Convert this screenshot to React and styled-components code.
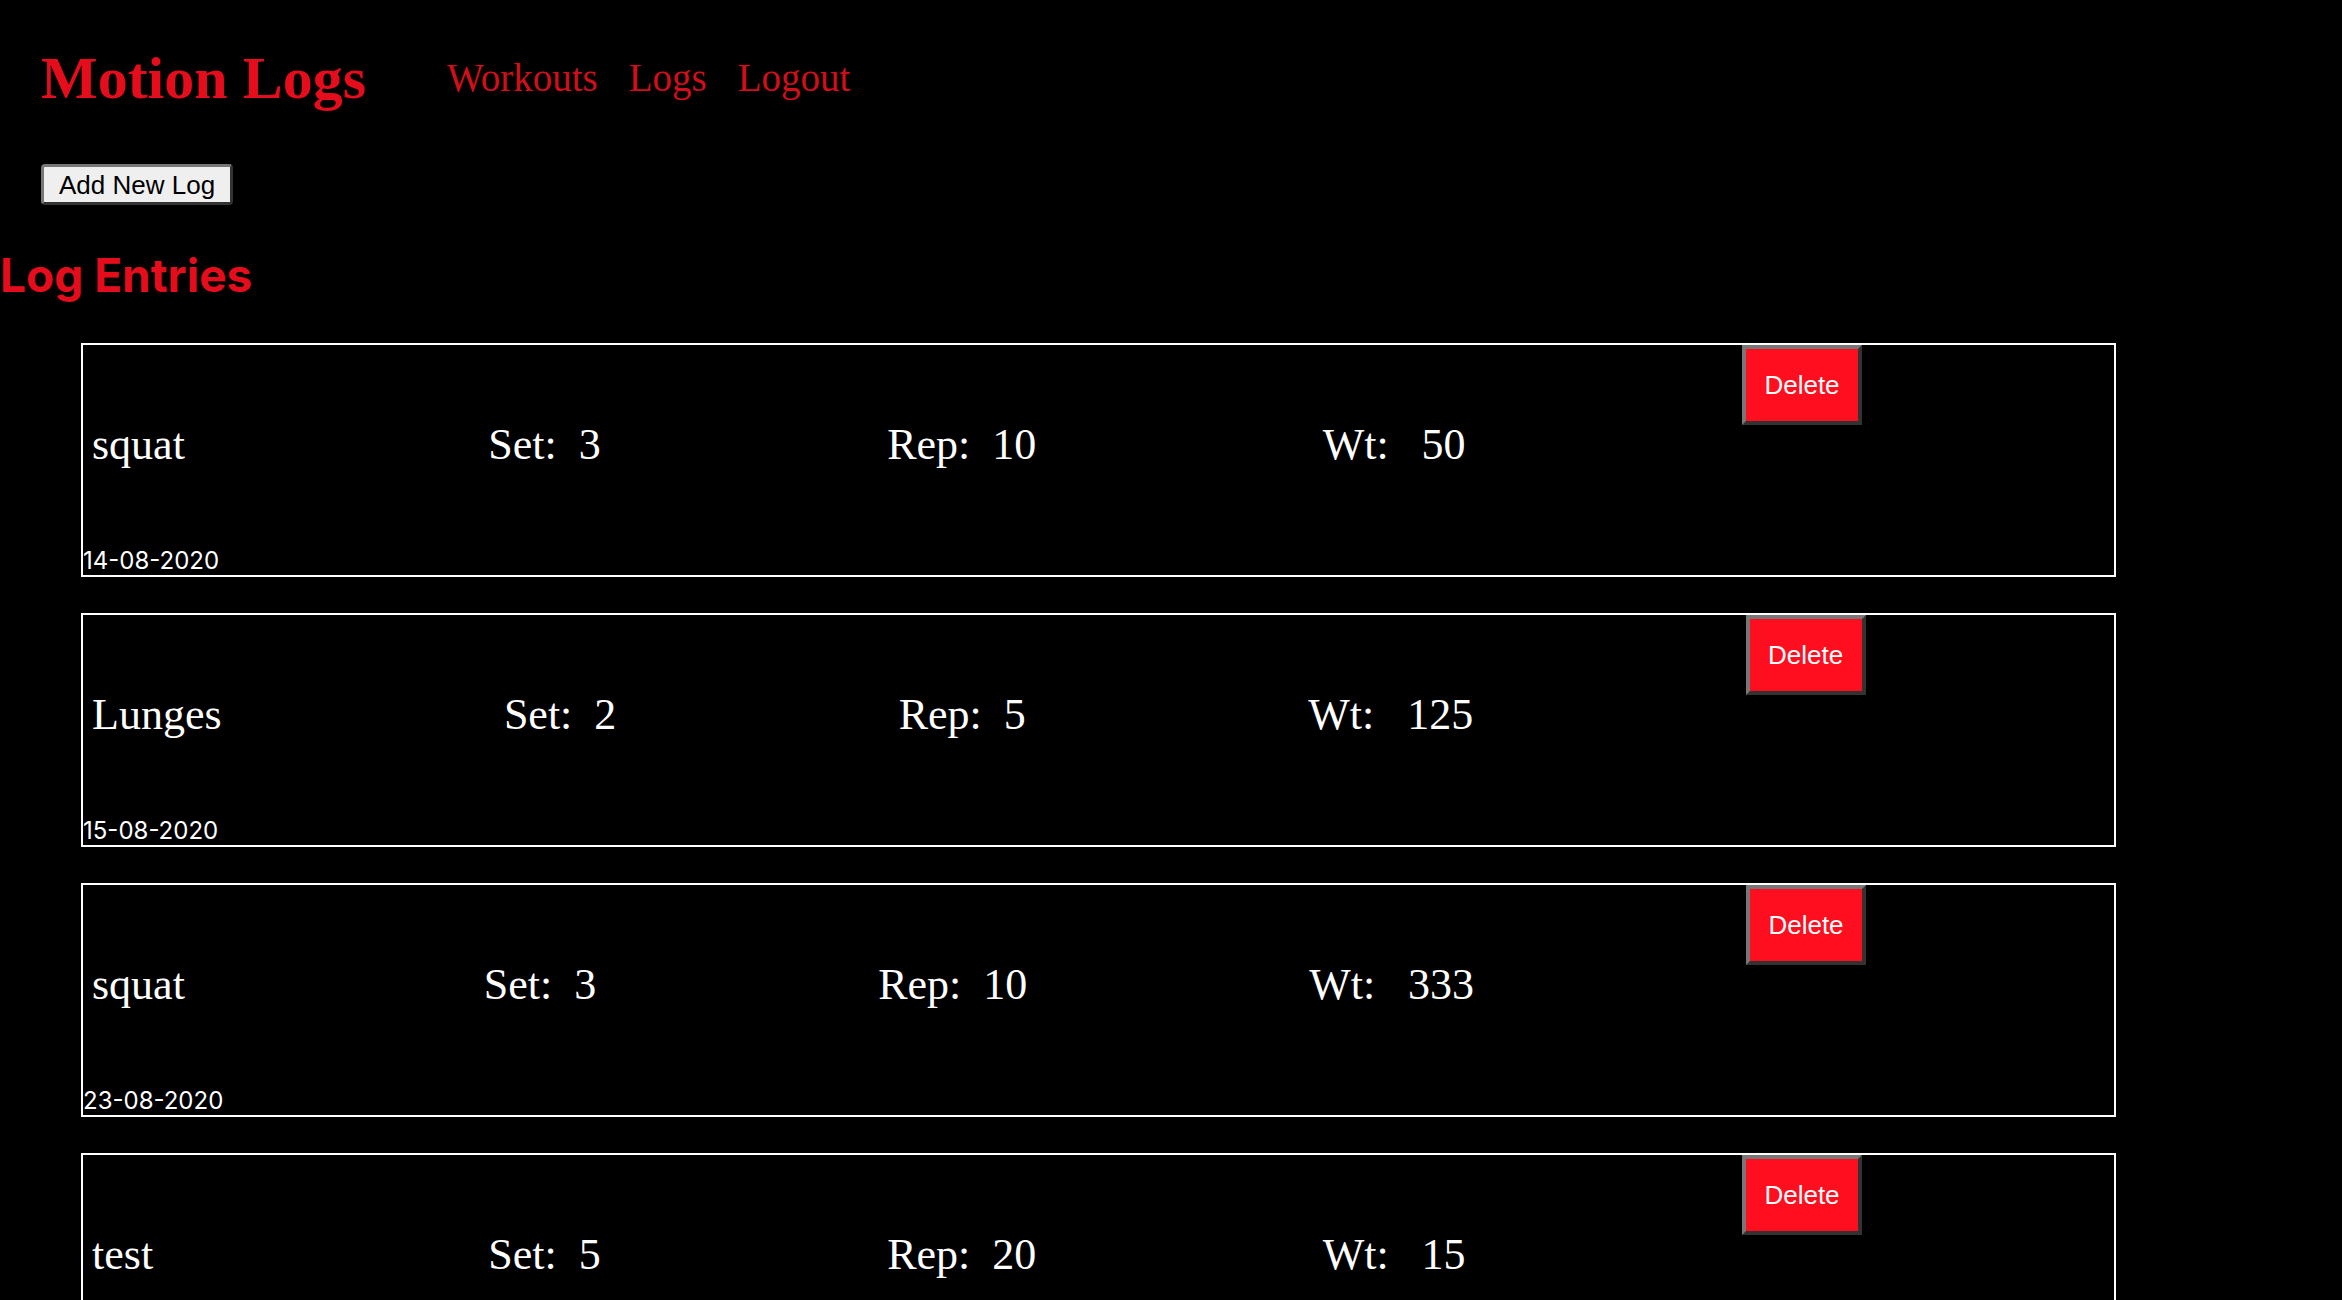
import React from "react";
import styled, { createGlobalStyle } from "styled-components";

const GlobalStyle = createGlobalStyle`
    html, body {
        margin: 0;
        padding: 0;
        background-color: #000;
    }

    body {
        font-family: "Liberation Serif", "Times New Roman", serif;
        color: #fff;
    }
`;

const Page = styled.div`
    min-height: 100vh;
    background-color: #000;
    padding-top: 44px;
`;

const Header = styled.header`
    display: flex;
    align-items: center;
    padding-left: 41px;
`;

const Title = styled.h1`
    margin: 0;
    font-family: "Liberation Serif", serif;
    font-size: 60px;
    font-weight: 700;
    color: #e50c1c;
`;

const Nav = styled.nav`
    display: flex;
    gap: 31px;
    margin-left: 81px;
    margin-top: -2px;
`;

const NavLink = styled.a`
    font-family: "Liberation Serif", serif;
    font-size: 39px;
    color: #d20e1b;
    text-decoration: none;
    cursor: pointer;
`;

const Toolbar = styled.div`
    padding: 51px 0 0 41px;
`;

const AddButton = styled.button`
    box-sizing: border-box;
    height: 41px;
    padding: 0 15px;
    font-family: "Liberation Sans", Arial, sans-serif;
    font-size: 26px;
    line-height: 1;
    color: #000;
    background-color: #efefef;
    border: 3px solid;
    border-color: #777 #333 #333 #777;
    border-radius: 4px;
    cursor: pointer;
`;

const Heading = styled.h2`
    margin: 43px 0 0 0;
    font-family: Inter, "Liberation Sans", sans-serif;
    font-size: 46px;
    font-weight: 700;
    line-height: 1.2;
    color: #e50c1c;
`;

const List = styled.div`
    display: flex;
    flex-direction: column;
    gap: 36px;
    padding: 40px 226px 0 81px;
`;

const Card = styled.div`
    box-sizing: border-box;
    height: 234px;
    border: 2px solid #fff;
    display: flex;
    flex-direction: column;
`;

const Row = styled.div`
    display: flex;
    align-items: center;
    height: 201px;
    padding-left: 9px;
`;

const Cell = styled.div`
    flex: 1 1 auto;
    font-family: "Liberation Serif", serif;
    font-size: 44px;
    margin-top: -2px;
    color: #fff;
    white-space: pre;
`;

const Name = styled.span`
    display: inline-block;
    min-width: 110px;
`;

const ActionCell = styled.div`
    flex: 0.88 1 auto;
    align-self: flex-start;
    margin-left: -10px;
`;

const DeleteButton = styled.button`
    box-sizing: border-box;
    width: 120px;
    height: 80px;
    padding: 0;
    font-family: "Liberation Sans", Arial, sans-serif;
    font-size: 26px;
    color: #fff;
    background-color: #fe0e1e;
    border: 4px solid;
    border-color: #777 #333 #333 #777;
    cursor: pointer;
`;

const DateText = styled.div`
    font-family: Inter, "Liberation Sans", sans-serif;
    font-size: 24px;
    line-height: 29px;
    color: #fff;
`;

const logs = [
    { name: "squat", set: 3, rep: 10, wt: 50, date: "14-08-2020" },
    { name: "Lunges", set: 2, rep: 5, wt: 125, date: "15-08-2020" },
    { name: "squat", set: 3, rep: 10, wt: 333, date: "23-08-2020" },
    { name: "test", set: 5, rep: 20, wt: 15, date: "29-08-2020" },
];

function LogCard({ log }) {
    return (
        <Card>
            <Row>
                <Cell>
                    <Name>{log.name}</Name>
                </Cell>
                <Cell>{`Set:  ${log.set}`}</Cell>
                <Cell>{`Rep:  ${log.rep}`}</Cell>
                <Cell>{`Wt:   ${log.wt}`}</Cell>
                <ActionCell>
                    <DeleteButton>Delete</DeleteButton>
                </ActionCell>
            </Row>
            <DateText>{log.date}</DateText>
        </Card>
    );
}

export default function App() {
    return (
        <>
            <GlobalStyle />
            <Page>
                <Header>
                    <Title>Motion Logs</Title>
                    <Nav>
                        <NavLink>Workouts</NavLink>
                        <NavLink>Logs</NavLink>
                        <NavLink>Logout</NavLink>
                    </Nav>
                </Header>
                <Toolbar>
                    <AddButton>Add New Log</AddButton>
                </Toolbar>
                <Heading>Log Entries</Heading>
                <List>
                    {logs.map((log, i) => (
                        <LogCard key={i} log={log} />
                    ))}
                </List>
            </Page>
        </>
    );
}
